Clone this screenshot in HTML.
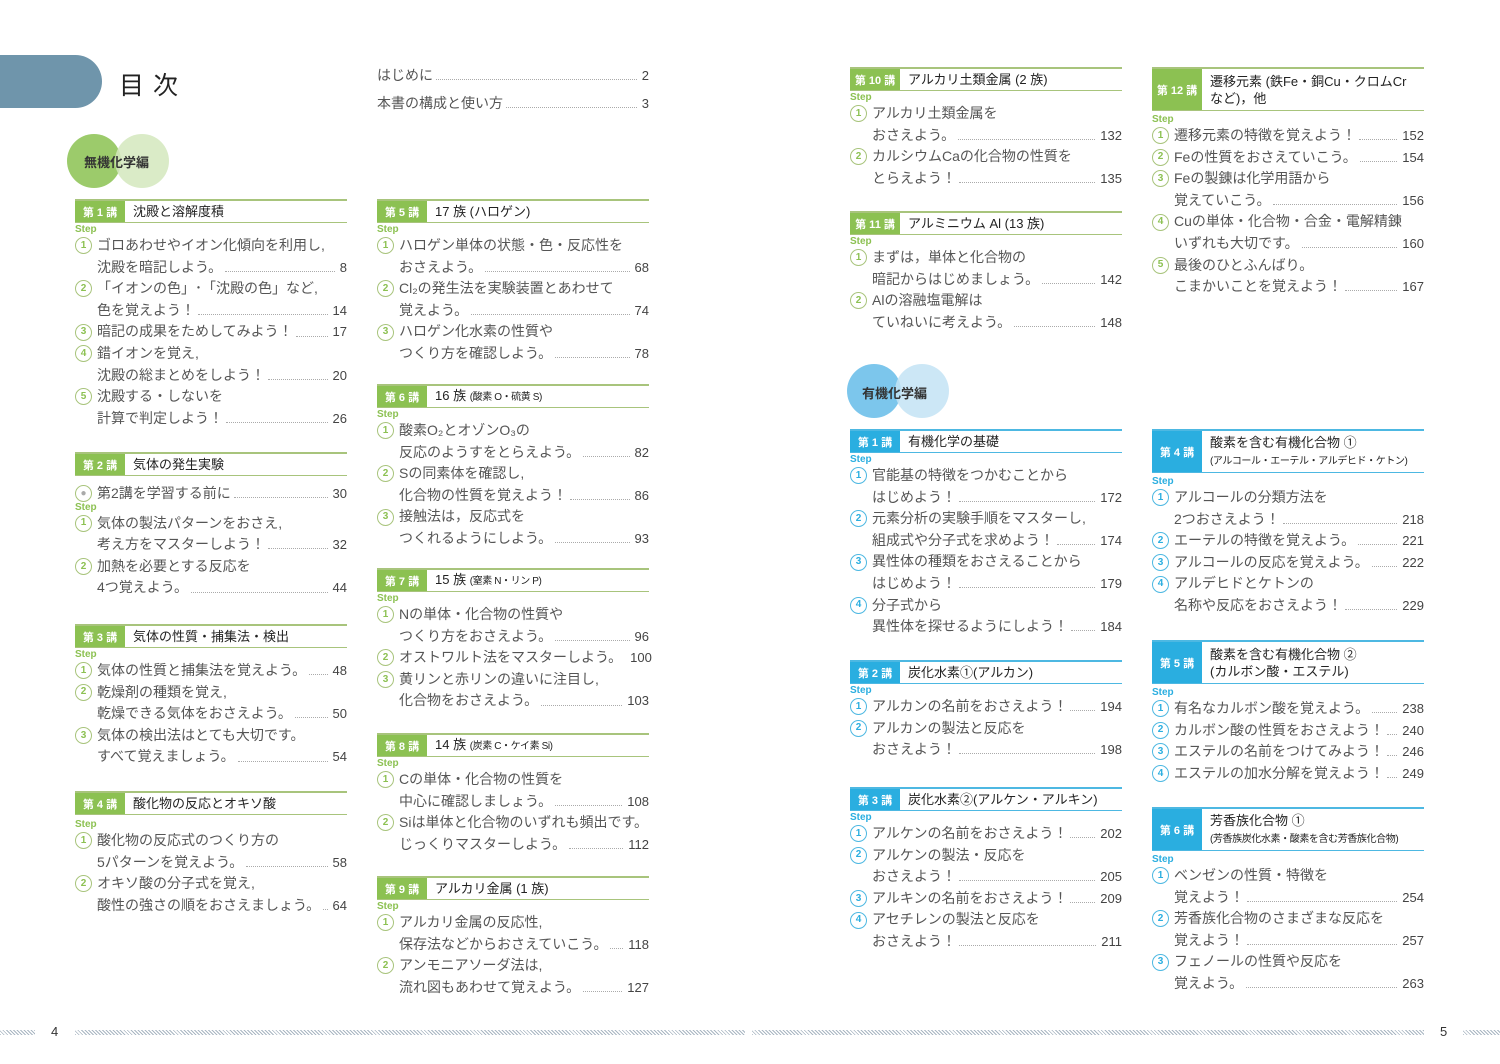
<!DOCTYPE html>
<html><head><meta charset="utf-8">
<style>
*{margin:0;padding:0;box-sizing:border-box}
body{width:1500px;height:1064px;background:#fff;position:relative;overflow:hidden;font-family:"Liberation Sans","Noto Sans CJK JP",sans-serif;color:#555}
.blk{position:absolute;width:272px}
.hd{height:24px;border-top:2px solid var(--c2);border-bottom:1px solid var(--c2);display:flex;align-items:stretch}
.hd.two{height:44px}
.hd .n{background:var(--c);color:#fff;width:50px;font-size:11px;font-weight:bold;display:flex;align-items:center;justify-content:center;flex:none}
.hd .t{padding-left:8px;font-size:13px;color:#222;display:flex;align-items:center;line-height:17px;white-space:nowrap}
.hd .t small{font-size:10px;letter-spacing:-0.4px;white-space:nowrap}
.step{font-size:10px;font-weight:bold;color:var(--c);height:12px;line-height:14px}
.l{height:21.6px;line-height:21.6px;font-size:14px;color:#555;display:flex;white-space:nowrap;align-items:center}
.l .c{width:17px;height:17px;border:1.5px solid var(--c2);border-radius:50%;font-size:10px;font-weight:bold;color:var(--c);display:flex;align-items:center;justify-content:center;margin-right:5px;flex:none;line-height:1}
.l.i{padding-left:22px}
.l .d{flex:1;border-bottom:1px dotted #aaa;margin:0 5px 0 3px;height:1px;align-self:center;margin-top:8px}
.l .p{font-size:13px;color:#444}
.g{--c:#8cc152;--c2:#a8c47c}
.b{--c:#2aaee0;--c2:#4db8e2}
.circ{position:absolute;border-radius:50%;width:54px;height:54px}
.stripe{position:absolute;top:1030px;height:5px;background:repeating-linear-gradient(45deg,#a9b6c2 0 1px,#fff 1px 2.5px)}
</style></head><body>

<div style="position:absolute;left:0;top:55px;width:102px;height:53px;background:#6f95ab;border-radius:0 27px 27px 0"></div>
<div style="position:absolute;left:119px;top:66px;font-size:25px;color:#222;letter-spacing:9px">目次</div>

<div class="circ" style="left:67px;top:134px;background:#9ccb6b"></div>
<div class="circ" style="left:115px;top:134px;background:#d3e7bd;opacity:.85"></div>
<div style="position:absolute;left:84px;top:152px;font-size:13px;font-weight:bold;color:#333">無機化学編</div>

<div class="circ" style="left:847px;top:364px;background:#7cc6ec"></div>
<div class="circ" style="left:895px;top:364px;background:#c3e3f5;opacity:.85"></div>
<div style="position:absolute;left:862px;top:383px;font-size:13px;font-weight:bold;color:#333">有機化学編</div>

<!-- col2 intro -->
<div class="blk" style="left:377px;top:65px"><div class="l">はじめに<span class="d"></span><span class="p">2</span></div></div>
<div class="blk" style="left:377px;top:93px"><div class="l">本書の構成と使い方<span class="d"></span><span class="p">3</span></div></div>

<!-- COL1 -->
<div class="blk g" style="left:75px;top:199px">
<div class="hd"><span class="n">第 1 講</span><span class="t"><span>沈殿と溶解度積</span></span></div>
<div class="step">Step</div>
<div class="l"><span class="c">1</span>ゴロあわせやイオン化傾向を利用し,</div>
<div class="l i">沈殿を暗記しよう。<span class="d"></span><span class="p">8</span></div>
<div class="l"><span class="c">2</span>「イオンの色」･「沈殿の色」など,</div>
<div class="l i">色を覚えよう！<span class="d"></span><span class="p">14</span></div>
<div class="l"><span class="c">3</span>暗記の成果をためしてみよう！<span class="d"></span><span class="p">17</span></div>
<div class="l"><span class="c">4</span>錯イオンを覚え,</div>
<div class="l i">沈殿の総まとめをしよう！<span class="d"></span><span class="p">20</span></div>
<div class="l"><span class="c">5</span>沈殿する・しないを</div>
<div class="l i">計算で判定しよう！<span class="d"></span><span class="p">26</span></div>
</div>

<div class="blk g" style="left:75px;top:452px">
<div class="hd"><span class="n">第 2 講</span><span class="t"><span>気体の発生実験</span></span></div>
<div class="l" style="margin-top:7px"><span class="c" style="color:#aaa">●</span>第2講を学習する前に<span class="d"></span><span class="p">30</span></div>
<div class="step" style="margin-top:-4px">Step</div>
<div class="l"><span class="c">1</span>気体の製法パターンをおさえ,</div>
<div class="l i">考え方をマスターしよう！<span class="d"></span><span class="p">32</span></div>
<div class="l"><span class="c">2</span>加熱を必要とする反応を</div>
<div class="l i">4つ覚えよう。<span class="d"></span><span class="p">44</span></div>
</div>

<div class="blk g" style="left:75px;top:624px">
<div class="hd"><span class="n">第 3 講</span><span class="t"><span>気体の性質・捕集法・検出</span></span></div>
<div class="step">Step</div>
<div class="l"><span class="c">1</span>気体の性質と捕集法を覚えよう。<span class="d"></span><span class="p">48</span></div>
<div class="l"><span class="c">2</span>乾燥剤の種類を覚え,</div>
<div class="l i">乾燥できる気体をおさえよう。<span class="d"></span><span class="p">50</span></div>
<div class="l"><span class="c">3</span>気体の検出法はとても大切です。</div>
<div class="l i">すべて覚えましょう。<span class="d"></span><span class="p">54</span></div>
</div>

<div class="blk g" style="left:75px;top:791px">
<div class="hd"><span class="n">第 4 講</span><span class="t"><span>酸化物の反応とオキソ酸</span></span></div>
<div class="step" style="margin-top:3px">Step</div>
<div class="l"><span class="c">1</span>酸化物の反応式のつくり方の</div>
<div class="l i">5パターンを覚えよう。<span class="d"></span><span class="p">58</span></div>
<div class="l"><span class="c">2</span>オキソ酸の分子式を覚え,</div>
<div class="l i">酸性の強さの順をおさえましょう。<span class="d"></span><span class="p">64</span></div>
</div>

<!-- COL2 -->
<div class="blk g" style="left:377px;top:199px">
<div class="hd"><span class="n">第 5 講</span><span class="t"><span>17 族 (ハロゲン)</span></span></div>
<div class="step">Step</div>
<div class="l"><span class="c">1</span>ハロゲン単体の状態・色・反応性を</div>
<div class="l i">おさえよう。<span class="d"></span><span class="p">68</span></div>
<div class="l"><span class="c">2</span>Cl₂の発生法を実験装置とあわせて</div>
<div class="l i">覚えよう。<span class="d"></span><span class="p">74</span></div>
<div class="l"><span class="c">3</span>ハロゲン化水素の性質や</div>
<div class="l i">つくり方を確認しよう。<span class="d"></span><span class="p">78</span></div>
</div>

<div class="blk g" style="left:377px;top:384px">
<div class="hd"><span class="n">第 6 講</span><span class="t"><span>16 族 <small>(酸素 O・硫黄 S)</small></span></span></div>
<div class="step">Step</div>
<div class="l"><span class="c">1</span>酸素O₂とオゾンO₃の</div>
<div class="l i">反応のようすをとらえよう。<span class="d"></span><span class="p">82</span></div>
<div class="l"><span class="c">2</span>Sの同素体を確認し,</div>
<div class="l i">化合物の性質を覚えよう！<span class="d"></span><span class="p">86</span></div>
<div class="l"><span class="c">3</span>接触法は，反応式を</div>
<div class="l i">つくれるようにしよう。<span class="d"></span><span class="p">93</span></div>
</div>

<div class="blk g" style="left:377px;top:568px">
<div class="hd"><span class="n">第 7 講</span><span class="t"><span>15 族 <small>(窒素 N・リン P)</small></span></span></div>
<div class="step">Step</div>
<div class="l"><span class="c">1</span>Nの単体・化合物の性質や</div>
<div class="l i">つくり方をおさえよう。<span class="d"></span><span class="p">96</span></div>
<div class="l"><span class="c">2</span>オストワルト法をマスターしよう。<span class="d"></span><span class="p">100</span></div>
<div class="l"><span class="c">3</span>黄リンと赤リンの違いに注目し,</div>
<div class="l i">化合物をおさえよう。<span class="d"></span><span class="p">103</span></div>
</div>

<div class="blk g" style="left:377px;top:733px">
<div class="hd"><span class="n">第 8 講</span><span class="t"><span>14 族 <small>(炭素 C・ケイ素 Si)</small></span></span></div>
<div class="step">Step</div>
<div class="l"><span class="c">1</span>Cの単体・化合物の性質を</div>
<div class="l i">中心に確認しましょう。<span class="d"></span><span class="p">108</span></div>
<div class="l"><span class="c">2</span>Siは単体と化合物のいずれも頻出です。</div>
<div class="l i">じっくりマスターしよう。<span class="d"></span><span class="p">112</span></div>
</div>

<div class="blk g" style="left:377px;top:876px">
<div class="hd"><span class="n">第 9 講</span><span class="t"><span>アルカリ金属 (1 族)</span></span></div>
<div class="step">Step</div>
<div class="l"><span class="c">1</span>アルカリ金属の反応性,</div>
<div class="l i">保存法などからおさえていこう。<span class="d"></span><span class="p">118</span></div>
<div class="l"><span class="c">2</span>アンモニアソーダ法は,</div>
<div class="l i">流れ図もあわせて覚えよう。<span class="d"></span><span class="p">127</span></div>
</div>

<!-- COL3 -->
<div class="blk g" style="left:850px;top:67px">
<div class="hd"><span class="n">第 10 講</span><span class="t"><span>アルカリ土類金属 (2 族)</span></span></div>
<div class="step">Step</div>
<div class="l"><span class="c">1</span>アルカリ土類金属を</div>
<div class="l i">おさえよう。<span class="d"></span><span class="p">132</span></div>
<div class="l"><span class="c">2</span>カルシウムCaの化合物の性質を</div>
<div class="l i">とらえよう！<span class="d"></span><span class="p">135</span></div>
</div>

<div class="blk g" style="left:850px;top:211px">
<div class="hd"><span class="n">第 11 講</span><span class="t"><span>アルミニウム Al (13 族)</span></span></div>
<div class="step">Step</div>
<div class="l"><span class="c">1</span>まずは，単体と化合物の</div>
<div class="l i">暗記からはじめましょう。<span class="d"></span><span class="p">142</span></div>
<div class="l"><span class="c">2</span>Alの溶融塩電解は</div>
<div class="l i">ていねいに考えよう。<span class="d"></span><span class="p">148</span></div>
</div>

<div class="blk b" style="left:850px;top:429px">
<div class="hd"><span class="n">第 1 講</span><span class="t"><span>有機化学の基礎</span></span></div>
<div class="step">Step</div>
<div class="l"><span class="c">1</span>官能基の特徴をつかむことから</div>
<div class="l i">はじめよう！<span class="d"></span><span class="p">172</span></div>
<div class="l"><span class="c">2</span>元素分析の実験手順をマスターし,</div>
<div class="l i">組成式や分子式を求めよう！<span class="d"></span><span class="p">174</span></div>
<div class="l"><span class="c">3</span>異性体の種類をおさえることから</div>
<div class="l i">はじめよう！<span class="d"></span><span class="p">179</span></div>
<div class="l"><span class="c">4</span>分子式から</div>
<div class="l i">異性体を探せるようにしよう！<span class="d"></span><span class="p">184</span></div>
</div>

<div class="blk b" style="left:850px;top:660px">
<div class="hd"><span class="n">第 2 講</span><span class="t"><span>炭化水素①(アルカン)</span></span></div>
<div class="step">Step</div>
<div class="l"><span class="c">1</span>アルカンの名前をおさえよう！<span class="d"></span><span class="p">194</span></div>
<div class="l"><span class="c">2</span>アルカンの製法と反応を</div>
<div class="l i">おさえよう！<span class="d"></span><span class="p">198</span></div>
</div>

<div class="blk b" style="left:850px;top:787px">
<div class="hd"><span class="n">第 3 講</span><span class="t"><span>炭化水素②(アルケン・アルキン)</span></span></div>
<div class="step">Step</div>
<div class="l"><span class="c">1</span>アルケンの名前をおさえよう！<span class="d"></span><span class="p">202</span></div>
<div class="l"><span class="c">2</span>アルケンの製法・反応を</div>
<div class="l i">おさえよう！<span class="d"></span><span class="p">205</span></div>
<div class="l"><span class="c">3</span>アルキンの名前をおさえよう！<span class="d"></span><span class="p">209</span></div>
<div class="l"><span class="c">4</span>アセチレンの製法と反応を</div>
<div class="l i">おさえよう！<span class="d"></span><span class="p">211</span></div>
</div>

<!-- COL4 -->
<div class="blk g" style="left:1152px;top:67px">
<div class="hd two"><span class="n">第 12 講</span><span class="t"><span>遷移元素 (鉄Fe・銅Cu・クロムCr<br>など)，他</span></span></div>
<div class="step" style="margin-top:2px">Step</div>
<div class="l"><span class="c">1</span>遷移元素の特徴を覚えよう！<span class="d"></span><span class="p">152</span></div>
<div class="l"><span class="c">2</span>Feの性質をおさえていこう。<span class="d"></span><span class="p">154</span></div>
<div class="l"><span class="c">3</span>Feの製錬は化学用語から</div>
<div class="l i">覚えていこう。<span class="d"></span><span class="p">156</span></div>
<div class="l"><span class="c">4</span>Cuの単体・化合物・合金・電解精錬</div>
<div class="l i">いずれも大切です。<span class="d"></span><span class="p">160</span></div>
<div class="l"><span class="c">5</span>最後のひとふんばり。</div>
<div class="l i">こまかいことを覚えよう！<span class="d"></span><span class="p">167</span></div>
</div>

<div class="blk b" style="left:1152px;top:429px">
<div class="hd two"><span class="n">第 4 講</span><span class="t"><span>酸素を含む有機化合物 ①<br><small>(アルコール・エーテル・アルデヒド・ケトン)</small></span></span></div>
<div class="step" style="margin-top:2px">Step</div>
<div class="l"><span class="c">1</span>アルコールの分類方法を</div>
<div class="l i">2つおさえよう！<span class="d"></span><span class="p">218</span></div>
<div class="l"><span class="c">2</span>エーテルの特徴を覚えよう。<span class="d"></span><span class="p">221</span></div>
<div class="l"><span class="c">3</span>アルコールの反応を覚えよう。<span class="d"></span><span class="p">222</span></div>
<div class="l"><span class="c">4</span>アルデヒドとケトンの</div>
<div class="l i">名称や反応をおさえよう！<span class="d"></span><span class="p">229</span></div>
</div>

<div class="blk b" style="left:1152px;top:640px">
<div class="hd two"><span class="n">第 5 講</span><span class="t"><span>酸素を含む有機化合物 ②<br>(カルボン酸・エステル)</span></span></div>
<div class="step" style="margin-top:2px">Step</div>
<div class="l"><span class="c">1</span>有名なカルボン酸を覚えよう。<span class="d"></span><span class="p">238</span></div>
<div class="l"><span class="c">2</span>カルボン酸の性質をおさえよう！<span class="d"></span><span class="p">240</span></div>
<div class="l"><span class="c">3</span>エステルの名前をつけてみよう！<span class="d"></span><span class="p">246</span></div>
<div class="l"><span class="c">4</span>エステルの加水分解を覚えよう！<span class="d"></span><span class="p">249</span></div>
</div>

<div class="blk b" style="left:1152px;top:807px">
<div class="hd two"><span class="n">第 6 講</span><span class="t"><span>芳香族化合物 ①<br><small>(芳香族炭化水素・酸素を含む芳香族化合物)</small></span></span></div>
<div class="step" style="margin-top:2px">Step</div>
<div class="l"><span class="c">1</span>ベンゼンの性質・特徴を</div>
<div class="l i">覚えよう！<span class="d"></span><span class="p">254</span></div>
<div class="l"><span class="c">2</span>芳香族化合物のさまざまな反応を</div>
<div class="l i">覚えよう！<span class="d"></span><span class="p">257</span></div>
<div class="l"><span class="c">3</span>フェノールの性質や反応を</div>
<div class="l i">覚えよう。<span class="d"></span><span class="p">263</span></div>
</div>

<!-- footer -->
<div class="stripe" style="left:0;width:35px"></div>
<div class="stripe" style="left:75px;width:670px"></div>
<div class="stripe" style="left:752px;width:672px"></div>
<div class="stripe" style="left:1463px;width:37px"></div>
<div style="position:absolute;left:51px;top:1024px;font-size:13px;color:#333">4</div>
<div style="position:absolute;left:1440px;top:1024px;font-size:13px;color:#333">5</div>
</body></html>
